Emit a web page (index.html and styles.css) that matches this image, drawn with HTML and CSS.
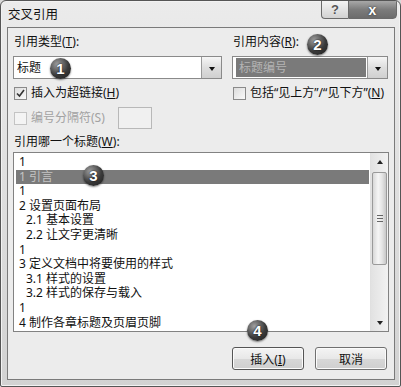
FILE: index.html
```html
<!DOCTYPE html>
<html lang="zh-CN">
<head>
    <meta charset="UTF-8">
    <title>交叉引用</title>
    <link rel="stylesheet" href="styles.css">
</head>
<body>

    <div class="window">
        <!-- 标题栏 -->
        <div class="titlebar">
            <span class="title">交叉引用</span>
            <div class="caption-buttons">
                <span class="cap-btn help">?</span>
                <span class="cap-btn close">x</span>
            </div>
        </div>

        <div class="client">
            <div class="options">
                <div class="field-label">引用类型(<u>T</u>):</div>
                <div class="field-label">引用内容(<u>R</u>):</div>

                <div class="combo">
                    <span class="combo-value">标题</span>
                    <span class="combo-arrow"></span>
                </div>
                <div class="combo">
                    <span class="combo-value"><span class="combo-selected">标题编号</span></span>
                    <span class="combo-arrow"></span>
                </div>

                <div class="check-row">
                    <span class="checkbox">
                        <svg width="9" height="9" viewBox="0 0 9 9"><path d="M1 4.5 L3.5 7 L8 1" fill="none" stroke="#333" stroke-width="1.6"/></svg>
                    </span>
                    <span>插入为超链接(<u>H</u>)</span>
                </div>
                <div class="check-row">
                    <span class="checkbox"></span>
                    <span>包括“见上方”/“见下方”(<u>N</u>)</span>
                </div>

                <div class="check-row disabled">
                    <span class="checkbox"></span>
                    <span>编号分隔符(S)</span>
                    <span class="sep-input"></span>
                </div>
            </div>

            <div class="field-label list-label">引用哪一个标题(<u>W</u>):</div>

            <div class="listbox">
                <ul class="items">
                    <li>1</li>
                    <li class="selected">1 引言</li>
                    <li>1</li>
                    <li>2 设置页面布局</li>
                    <li class="sub">2.1 基本设置</li>
                    <li class="sub">2.2 让文字更清晰</li>
                    <li>1</li>
                    <li>3 定义文档中将要使用的样式</li>
                    <li class="sub">3.1 样式的设置</li>
                    <li class="sub">3.2 样式的保存与载入</li>
                    <li>1</li>
                    <li>4 制作各章标题及页眉页脚</li>
                </ul>
                <div class="scrollbar">
                    <div class="scroll-btn"><span class="arrow-up"></span></div>
                    <div class="scroll-track">
                        <div class="scroll-thumb"><span class="grip"></span></div>
                    </div>
                    <div class="scroll-btn"><span class="arrow-down"></span></div>
                </div>
            </div>

            <div class="actions">
                <button class="btn default">插入(<u>I</u>)</button>
                <button class="btn">取消</button>
            </div>
        </div>

        <!-- 步骤编号 -->
        <span class="badge badge-1">1</span>
        <span class="badge badge-2">2</span>
        <span class="badge badge-3">3</span>
        <span class="badge badge-4">4</span>
    </div>

</body>
</html>
```

FILE: styles.css
```css
body {
    margin: 0;
    background: #d8d8d8;
    font-family: "Noto Sans", "Noto Sans CJK SC", sans-serif;
    font-size: 12px;
    color: #111;
}

.window {
    position: relative;
    width: 401px;
    height: 387px;
    box-sizing: border-box;
    border: 1px solid #555;
    border-radius: 6px 6px 2px 2px;
    background: linear-gradient(#ebebeb, #d2d2d2);
    box-shadow: inset 0 0 0 1px #f2f2f2;
    overflow: hidden;
}

/* 标题栏 */
.titlebar {
    height: 26px;
    display: flex;
    justify-content: space-between;
    padding-left: 7px;
}

.title {
    align-self: center;
    font-size: 12.5px;
    line-height: 16px;
    color: #111;
    margin-top: 2px;
}

.caption-buttons {
    display: flex;
    margin-top: -1px;
    margin-right: 3px;
}

.cap-btn {
    height: 19px;
    box-sizing: border-box;
    border: 1px solid #6a6a6a;
    display: flex;
    justify-content: center;
    align-items: center;
    font-family: "Liberation Sans", sans-serif;
    font-weight: bold;
}

.cap-btn.help {
    width: 27px;
    border-right: none;
    border-radius: 0 0 0 4px;
    background: linear-gradient(#f4f4f4, #d2d2d2);
    color: #555;
    font-size: 13px;
    text-shadow: 0 0 1px #fff;
}

.cap-btn.close {
    width: 49px;
    border-radius: 0 0 4px 0;
    background: linear-gradient(#a8a8a8, #7c7c7c 50%, #6c6c6c);
    color: #fff;
    font-size: 14px;
    text-shadow: 0 0 2px #222;
}

/* 客户区 */
.client {
    height: 353px;
    margin: 0 5px 0 6px;
    box-sizing: border-box;
    border: 1px solid #7a7a7a;
    background: #ececec;
    padding: 6px 5px 0 5px;
}

.options {
    display: grid;
    grid-template-columns: 209px 156px;
    grid-template-rows: 16px 23px 16px 22px;
    column-gap: 10px;
    row-gap: 6px;
}

.field-label {
    line-height: 16px;
    padding-left: 1px;
}

.combo {
    display: flex;
    box-sizing: border-box;
    border: 1px solid #8a8a8a;
    background: #fff;
}

.combo-value {
    flex: 1;
    display: flex;
    align-items: stretch;
    padding: 1px;
    line-height: 19px;
}

.combo-value:first-child {
    padding-left: 3px;
}

.combo-selected {
    flex: 1;
    background: #7a7a7a;
    color: #b4b4b4;
    padding-left: 3px;
    line-height: 19px;
}

.combo-arrow {
    width: 19px;
    border-left: 1px solid #9a9a9a;
    background: linear-gradient(#f6f6f6, #dedede 50%, #d0d0d0);
    display: flex;
    justify-content: center;
    align-items: center;
}

.combo-arrow::after {
    content: "";
    border-left: 3.5px solid transparent;
    border-right: 3.5px solid transparent;
    border-top: 4px solid #111;
    margin-top: 2px;
}

.check-row {
    display: flex;
    align-items: center;
    gap: 4px;
    line-height: 16px;
}

.checkbox {
    width: 13px;
    height: 13px;
    box-sizing: border-box;
    margin-left: 1px;
    border: 1px solid #8a8a8a;
    background: linear-gradient(135deg, #dcdcdc, #fafafa);
    display: flex;
    justify-content: center;
    align-items: center;
}

.check-row.disabled {
    color: #a2a2a2;
    grid-column: 1;
}

.check-row.disabled .checkbox {
    border-color: #c4c4c4;
    background: #f4f4f4;
}

.sep-input {
    width: 34px;
    height: 22px;
    box-sizing: border-box;
    margin-left: 9px;
    border: 1px solid #b8b8b8;
    background: #f0f0f0;
}

.list-label {
    margin-top: 5px;
}

/* 列表框 */
.listbox {
    margin-top: 2px;
    width: 376px;
    height: 180px;
    box-sizing: border-box;
    border: 1px solid #828282;
    background: #fff;
    display: flex;
}

.items {
    flex: 1;
    list-style: none;
    margin: 0;
    padding: 2px 0 0 2px;
    overflow: hidden;
}

.items li {
    line-height: 14.6px;
    height: 14.6px;
    padding-left: 3px;
    margin-right: 1px;
    white-space: nowrap;
}

.items li.sub {
    padding-left: 10px;
}

.items li.selected {
    background: #7a7a7a;
    color: #c4c4c4;
}

.scrollbar {
    width: 17px;
    display: flex;
    flex-direction: column;
    background: linear-gradient(90deg, #e2e2e2, #f2f2f2);
    border-left: 1px solid #e0e0e0;
}

.scroll-btn {
    height: 17px;
    display: flex;
    justify-content: center;
    align-items: center;
}

.arrow-up {
    border-left: 3.5px solid transparent;
    border-right: 3.5px solid transparent;
    border-bottom: 4px solid #222;
}

.arrow-down {
    border-left: 3.5px solid transparent;
    border-right: 3.5px solid transparent;
    border-top: 4px solid #222;
}

.scroll-track {
    flex: 1;
    padding-top: 2px;
}

.scroll-thumb {
    height: 93px;
    box-sizing: border-box;
    margin: 0 1px;
    border: 1px solid #9a9a9a;
    border-radius: 2px;
    background: linear-gradient(90deg, #d8d8d8, #f6f6f6 40%, #e4e4e4 70%, #c8c8c8);
    display: flex;
    justify-content: center;
    align-items: center;
}

.grip {
    width: 6px;
    height: 5px;
    border-top: 1px solid #666;
    border-bottom: 1px solid #666;
    position: relative;
}

.grip::after {
    content: "";
    position: absolute;
    left: 0;
    right: 0;
    top: 2px;
    border-top: 1px solid #666;
}

/* 按钮 */
.actions {
    display: flex;
    justify-content: flex-end;
    gap: 11px;
    margin-top: 15px;
    padding-right: 2px;
}

.btn {
    width: 72px;
    height: 23px;
    border: 1px solid #707070;
    border-radius: 3px;
    background: linear-gradient(#f4f4f4, #e8e8e8 50%, #d8d8d8 51%, #cfcfcf);
    box-shadow: inset 0 0 0 1px #fbfbfb;
    font-family: inherit;
    font-size: 12px;
    color: #111;
    padding: 0;
}

.btn.default {
    border-color: #555;
}

/* 步骤编号 */
.badge {
    position: absolute;
    width: 21px;
    height: 21px;
    border-radius: 50%;
    background: radial-gradient(circle at 35% 30%, #a0a0a0, #3a3a3a 55%, #1a1a1a);
    box-shadow: 0 1px 2px rgba(0, 0, 0, 0.5);
    color: #fff;
    font-family: "Liberation Sans", sans-serif;
    font-weight: bold;
    font-size: 15px;
    line-height: 21px;
    text-align: center;
    text-shadow: 0 0 2px #000;
}

.badge-1 { left: 49px; top: 57px; }
.badge-2 { left: 306px; top: 33px; }
.badge-3 { left: 82px; top: 164px; }
.badge-4 { left: 246px; top: 319px; }
```
